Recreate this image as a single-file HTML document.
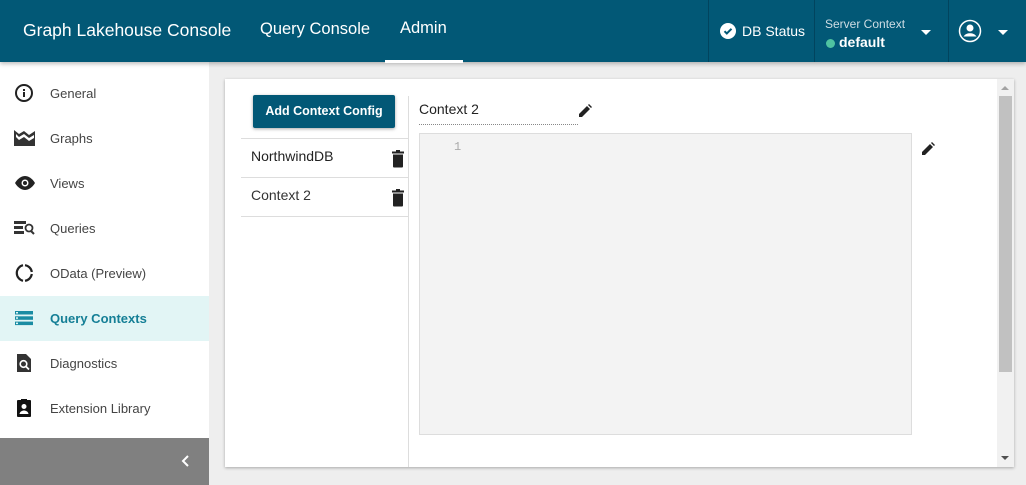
<!DOCTYPE html>
<html><head><meta charset="utf-8"><style>
*{box-sizing:border-box;margin:0;padding:0}
body{width:1026px;height:485px;overflow:hidden;background:#eeeeee;font-family:"Liberation Sans",Roboto,sans-serif;position:relative}
.hdr{position:absolute;left:0;top:0;width:1026px;height:62px;background:#025876;color:#fff;box-shadow:0 2px 4px rgba(0,0,0,.25);z-index:2}
.hdr .t{position:absolute;top:20px;font-size:17.5px}
.sep{position:absolute;top:0;width:1px;height:62px;background:#01445e}
.side{position:absolute;left:0;top:62px;width:209px;height:423px;background:#fff}
.item{position:absolute;left:0;width:209px;height:45px;font-size:13px;color:#444}
.item span{position:absolute;left:50px;top:15px}
.item svg{position:absolute;left:14px;top:12px}
.card{position:absolute;left:225px;top:79px;width:789px;height:388px;background:#fff;box-shadow:0 1px 3px rgba(0,0,0,.3)}
</style></head><body>
<div class="hdr">
<div class="t" style="left:23px">Graph Lakehouse Console</div>
<div class="t" style="left:260px;font-size:16.5px">Query Console</div>
<div class="t" style="left:400px;font-size:16.5px;top:19px">Admin</div>
<div style="position:absolute;left:385px;top:60px;width:78px;height:3px;background:#fff"></div>
<div class="sep" style="left:708px"></div>
<div class="sep" style="left:814px"></div>
<div class="sep" style="left:948px"></div>
<svg style="position:absolute;left:720px;top:23px" width="16" height="16" viewBox="0 0 16 16"><circle cx="8" cy="8" r="8" fill="#fff"/><path d="M4.5 8.2l2.3 2.3 4.7-4.7" stroke="#025876" stroke-width="2" fill="none"/></svg>
<div class="t" style="left:742px;top:23px;font-size:14px">DB Status</div>
<div style="position:absolute;left:825px;top:17px;font-size:12px;color:#cfdde4">Server Context</div>
<div style="position:absolute;left:826px;top:39px;width:9px;height:9px;border-radius:50%;background:#4fc3a1"></div>
<div style="position:absolute;left:839px;top:34px;font-size:14px;font-weight:bold">default</div>
<div style="position:absolute;left:921px;top:30px;border:5px solid transparent;border-top-color:#fff;border-bottom:0"></div>
<svg style="position:absolute;left:958px;top:19px" width="24" height="24" viewBox="0 0 24 24"><circle cx="12" cy="12" r="10.5" fill="none" stroke="#fff" stroke-width="1.5"/><circle cx="12" cy="9" r="3.5" fill="#fff"/><path d="M5.5 17.5c1.5-2.5 4-3.3 6.5-3.3s5 .8 6.5 3.3" fill="#fff"/></svg>
<div style="position:absolute;left:998px;top:30px;border:5px solid transparent;border-top-color:#fff;border-bottom:0"></div>
</div>
<div class="side">
<div class="item" style="top:9px"><svg width="20" height="20" viewBox="0 0 20 20"><circle cx="10" cy="10" r="8" fill="none" stroke="#222" stroke-width="2"/><rect x="9" y="9" width="2" height="5" fill="#222"/><rect x="9" y="6" width="2" height="2" fill="#222"/></svg><span>General</span></div>
<div class="item" style="top:54px"><svg width="22" height="20" viewBox="0 0 22 20"><path d="M0 2l5 4 5-3 5 4 6-4v15H0z" fill="#333"/><path d="M2 6l3 3 5-3 5 4 5-3v3l-5 3-5-4-5 3-3-3z" fill="#fff"/></svg><span>Graphs</span></div>
<div class="item" style="top:99px"><svg width="22" height="20" viewBox="0 0 22 20"><path d="M1 10c3-5 7-7 10-7s7 2 10 7c-3 5-7 7-10 7S4 15 1 10z" fill="#222"/><circle cx="11" cy="10" r="3.5" fill="#fff"/><circle cx="11" cy="10" r="2" fill="#222"/></svg><span>Views</span></div>
<div class="item" style="top:144px"><svg width="22" height="20" viewBox="0 0 22 20"><rect x="0" y="3" width="12" height="3" fill="#333"/><rect x="0" y="8" width="9" height="3" fill="#333"/><rect x="0" y="13" width="10" height="3" fill="#333"/><circle cx="15" cy="10" r="3.5" fill="none" stroke="#333" stroke-width="1.8"/><path d="M17 13l3 3" stroke="#333" stroke-width="2"/></svg><span>Queries</span></div>
<div class="item" style="top:189px"><svg width="20" height="20" viewBox="0 0 20 20"><path d="M11 2.2A8 8 0 0 1 17.8 9M17.8 11A8 8 0 0 1 11 17.8M9 17.8A8 8 0 0 1 9 2.2" fill="none" stroke="#222" stroke-width="2.2"/></svg><span>OData (Preview)</span></div>
<div class="item" style="top:234px;background:#e2f5f5;color:#157f96;font-weight:bold"><svg width="20" height="20" viewBox="0 0 20 20"><rect x="1" y="3" width="18" height="3.5" fill="#1a8ca3"/><rect x="1" y="8.3" width="18" height="3.5" fill="#1a8ca3"/><rect x="1" y="13.6" width="18" height="3.5" fill="#1a8ca3"/><rect x="2" y="4" width="2" height="1.5" fill="#e2f5f5"/><rect x="2" y="9.3" width="2" height="1.5" fill="#e2f5f5"/><rect x="2" y="14.6" width="2" height="1.5" fill="#e2f5f5"/></svg><span>Query Contexts</span></div>
<div class="item" style="top:279px"><svg width="20" height="20" viewBox="0 0 20 20"><path d="M3 1h9l5 5v13H3z" fill="#333"/><circle cx="9.5" cy="11" r="3.3" fill="none" stroke="#fff" stroke-width="1.6"/><path d="M12 13.5l3 3" stroke="#fff" stroke-width="1.8"/></svg><span>Diagnostics</span></div>
<div class="item" style="top:324px"><svg width="20" height="20" viewBox="0 0 20 20"><rect x="3" y="2" width="14" height="17" rx="1" fill="#111"/><rect x="7" y="1" width="6" height="3" fill="#111"/><circle cx="10" cy="8.5" r="2.5" fill="#fff"/><path d="M5.5 16c.5-2.5 2.5-3.5 4.5-3.5s4 1 4.5 3.5z" fill="#fff"/></svg><span>Extension Library</span></div>
<div style="position:absolute;left:0;top:376px;width:209px;height:47px;background:#808080"></div>
<svg style="position:absolute;left:180px;top:392px" width="12" height="14" viewBox="0 0 12 14"><path d="M8 2L3 7l5 5" stroke="#fff" stroke-width="2" fill="none"/></svg>
</div>
<div class="card">
<div style="position:absolute;left:28px;top:16px;width:142px;height:33px;background:#025876;color:#fff;font-size:12.5px;font-weight:bold;text-align:center;line-height:33px;border-radius:2px;box-shadow:0 1px 3px rgba(0,0,0,.35)">Add Context Config</div>
<div style="position:absolute;left:183px;top:17px;width:1px;height:371px;background:#ddd"></div>
<div style="position:absolute;left:16px;top:59px;width:167px;height:1px;background:#ddd"></div>
<div style="position:absolute;left:16px;top:98px;width:167px;height:1px;background:#ddd"></div>
<div style="position:absolute;left:16px;top:137px;width:167px;height:1px;background:#ddd"></div>
<div style="position:absolute;left:26px;top:69px;font-size:14px;color:#222">NorthwindDB</div>
<div style="position:absolute;left:26px;top:108px;font-size:14px;color:#333">Context 2</div>
<svg style="position:absolute;left:166px;top:71px" width="14" height="18" viewBox="0 0 14 18"><rect x="1" y="1.5" width="12" height="2" fill="#222"/><rect x="5" y="0" width="4" height="2" fill="#222"/><path d="M2 4.5h10v12a1 1 0 0 1-1 1H3a1 1 0 0 1-1-1z" fill="#222"/></svg>
<svg style="position:absolute;left:166px;top:110px" width="14" height="18" viewBox="0 0 14 18"><rect x="1" y="1.5" width="12" height="2" fill="#222"/><rect x="5" y="0" width="4" height="2" fill="#222"/><path d="M2 4.5h10v12a1 1 0 0 1-1 1H3a1 1 0 0 1-1-1z" fill="#222"/></svg>
<div style="position:absolute;left:194px;top:22px;font-size:14px;color:#222">Context 2</div>
<div style="position:absolute;left:194px;top:45px;width:159px;border-top:1px dotted #888"></div>
<svg style="position:absolute;left:354px;top:25px" width="13" height="13" viewBox="0 0 13 13"><path d="M0 10v3h3l8-8-3-3zM9 1l3 3 1-1-3-3z" fill="#222"/></svg>
<svg style="position:absolute;left:697px;top:63px" width="13" height="13" viewBox="0 0 13 13"><path d="M0 10v3h3l8-8-3-3zM9 1l3 3 1-1-3-3z" fill="#222"/></svg>
<div style="position:absolute;left:194px;top:54px;width:493px;height:302px;background:#f3f3f3;border:1px solid #ddd"></div>
<div style="position:absolute;left:229px;top:61px;font-size:12px;color:#aaa;font-family:'Liberation Mono',monospace">1</div>
<div style="position:absolute;left:772px;top:0;width:17px;height:388px;background:#f1f1f1"></div>
<div style="position:absolute;left:774px;top:17px;width:13px;height:276px;background:#c1c1c1"></div>
<div style="position:absolute;left:776px;top:7px;border:4px solid transparent;border-bottom-color:#a3a3a3;border-top:0"></div>
<div style="position:absolute;left:776px;top:377px;border:4px solid transparent;border-top-color:#505050;border-bottom:0"></div>
</div>
</body></html>
